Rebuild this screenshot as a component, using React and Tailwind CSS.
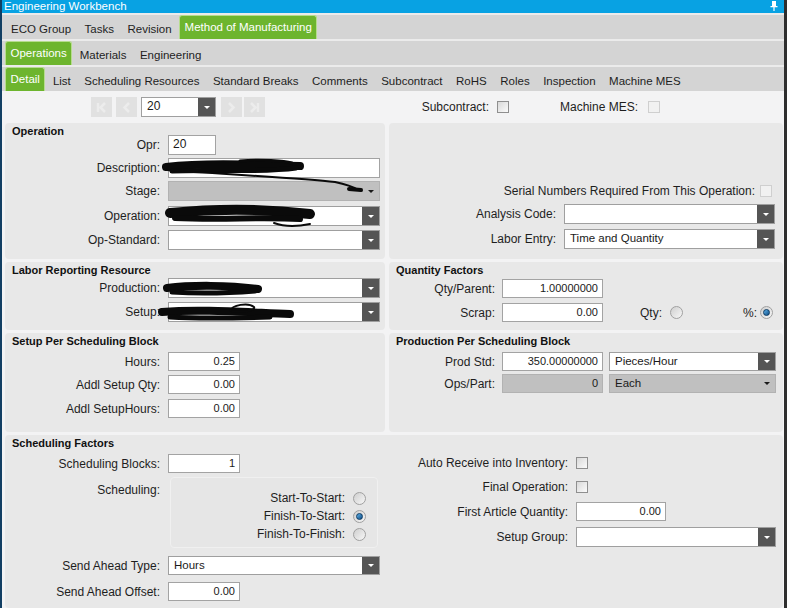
import React from 'react';

function Pin() {
  return (
    <svg width="8" height="10" viewBox="0 0 8 10" className="mt-[-2px]">
      <path d="M2 0h4v5h1.5v1.2h-7V5H2z" fill="#ffffff" />
      <path d="M4 6v4" stroke="#ffffff" strokeWidth="1.2" />
    </svg>
  );
}

function TabRow({ children }) {
  return (
    <div className="h-[26px] border-t-2 border-[#ebebeb] bg-[#d4d4d4] flex items-stretch px-[3px] gap-[1.5px]">
      {children}
    </div>
  );
}

function Tab({ label, active }) {
  if (active) {
    return (
      <div className="px-[4.5px] bg-[#6db52e] border border-b-0 border-[#b6dc8e] rounded-t-[3px] text-white text-[11.5px] leading-[22px] whitespace-nowrap">
        {label}
      </div>
    );
  }
  return <div className="px-[6px] text-[11.5px] leading-[28px] text-[#1e1e1e] whitespace-nowrap">{label}</div>;
}

function Arrow({ dark }) {
  if (dark) {
    return (
      <div className="w-[17px] bg-[#555555] flex items-center justify-center shrink-0">
        <div className="w-0 h-0 border-l-[3px] border-r-[3px] border-t-[3px] border-l-transparent border-r-transparent border-t-white" />
      </div>
    );
  }
  return (
    <div className="w-[17px] flex items-center justify-center shrink-0">
      <div className="w-0 h-0 border-l-[3px] border-r-[3px] border-t-[3px] border-l-transparent border-r-transparent border-t-[#1a1a1a]" />
    </div>
  );
}

function Combo({ className, value, disabled }) {
  return (
    <div
      className={`flex items-stretch border ${
        disabled ? 'bg-[#c0c0c0] border-[#b2b2b2]' : 'bg-white border-[#9f9f9f]'
      } ${className}`}
    >
      <div className="flex-1 pl-[5px] text-[11.5px] leading-[16px] text-[#1a1a1a] whitespace-nowrap overflow-hidden">
        {value}
      </div>
      <Arrow dark={!disabled} />
    </div>
  );
}

function Input({ className, value, disabled, left }) {
  return (
    <div
      className={`border ${disabled ? 'bg-[#c0c0c0] border-[#b2b2b2]' : 'bg-white border-[#a3a3a3]'} ${
        left ? 'text-left pl-[4px]' : 'text-right pr-[4px]'
      } text-[11px] leading-[17px] text-[#1a1a1a] ${className}`}
    >
      {value}
    </div>
  );
}

function Check({ disabled }) {
  return (
    <div
      className={`w-[12px] h-[12px] border shrink-0 ${
        disabled ? 'border-[#cfcfcf] bg-[#f1f1f1]' : 'border-[#8f8f8f] bg-gradient-to-br from-[#d9d9d9] to-[#fbfbfb]'
      }`}
    />
  );
}

function Radio({ checked }) {
  return (
    <div className="w-[13px] h-[13px] rounded-full border border-[#a0a0a0] bg-gradient-to-br from-[#cfcfcf] to-[#f7f7f7] flex items-center justify-center shrink-0">
      {checked ? (
        <div className="w-[7px] h-[7px] rounded-full bg-gradient-to-br from-[#5fb2ea] to-[#0d4f86] border border-[#0b3a63]" />
      ) : null}
    </div>
  );
}

function Panel({ className, children }) {
  return <div className={`bg-[#e8e8e8] rounded-[4px] ${className}`}>{children}</div>;
}

function Title({ children }) {
  return <div className="pl-[7px] pt-[2px] h-[14px] text-[11px] font-bold leading-[12px] text-[#111]">{children}</div>;
}

function Row({ label, lw, className, children }) {
  return (
    <div className={`flex items-center ${className || ''}`}>
      <div className={`${lw} text-right text-[12px] leading-[14px] text-[#1e1e1e] shrink-0 whitespace-nowrap`}>{label}</div>
      {children}
    </div>
  );
}

function NavBtn({ kind }) {
  let d = '';
  if (kind === 'first') d = 'M3 2v9 M10 2L5.5 6.5L10 11';
  if (kind === 'prev') d = 'M9 2L4.5 6.5L9 11';
  if (kind === 'next') d = 'M4 2L8.5 6.5L4 11';
  if (kind === 'last') d = 'M10 2v9 M3 2L7.5 6.5L3 11';
  return (
    <div className="w-[21px] h-[20px] bg-[#e1e1e1] flex items-center justify-center">
      <svg width="13" height="13" viewBox="0 0 13 13" fill="none">
        <path d={d} stroke="#ececec" strokeWidth="2.5" />
      </svg>
    </div>
  );
}

function Scribbles() {
  return (
    <svg
      className="absolute left-0 top-0 pointer-events-none"
      width="787"
      height="608"
      viewBox="0 0 787 608"
      fill="none"
      stroke="#0a0a0a"
      strokeLinecap="round"
      strokeLinejoin="round"
    >
      <path d="M166 167 C 200 163, 240 164, 300 166" strokeWidth="8" />
      <path d="M172 171 C 210 169, 260 173, 296 168" strokeWidth="5" />
      <path d="M240 161 C 260 159, 285 161, 292 163" strokeWidth="3" />
      <path d="M167 170 C 220 174, 300 178, 335 182 C 350 185, 355 188, 358 190" strokeWidth="2" />
      <path d="M349 189 L 361 190" strokeWidth="4" />
      <path d="M170 213 C 210 209, 260 208, 310 214" strokeWidth="10" />
      <path d="M175 218 C 220 220, 260 217, 300 219" strokeWidth="6" />
      <path d="M274 223 C 285 227, 300 226, 310 224" strokeWidth="2" />
      <path d="M167 288 C 190 285, 230 285, 258 289" strokeWidth="8" />
      <path d="M172 292 C 200 294, 230 293, 255 291" strokeWidth="5" />
      <path d="M162 312 C 200 309, 240 312, 290 314" strokeWidth="8" />
      <path d="M170 317 C 200 319, 240 318, 270 317" strokeWidth="5" />
      <path d="M230 311 C 232 305, 248 302, 254 307 C 256 311, 240 313, 232 311" strokeWidth="2" />
    </svg>
  );
}

export default function App() {
  const L = 'w-[163px] pr-[8px]';
  return (
    <div className="relative w-[787px] h-[608px] overflow-hidden flex font-['Liberation_Sans',Arial,sans-serif] text-[#1e1e1e] select-none">
      <div className="w-[2px] bg-[#123f63] shrink-0" />
      <div className="flex-1 flex flex-col min-w-0">
        <div className="h-[13px] bg-[#08a2e3] flex items-center justify-between pl-[2px] pr-[6px] shrink-0">
          <span className="text-white text-[11.5px] leading-[13px]">Engineering Workbench</span>
          <Pin />
        </div>
        <TabRow>
          <Tab label="ECO Group" />
          <Tab label="Tasks" />
          <Tab label="Revision" />
          <Tab label="Method of Manufacturing" active />
        </TabRow>
        <TabRow>
          <Tab label="Operations" active />
          <Tab label="Materials" />
          <Tab label="Engineering" />
        </TabRow>
        <TabRow>
          <Tab label="Detail" active />
          <Tab label="List" />
          <Tab label="Scheduling Resources" />
          <Tab label="Standard Breaks" />
          <Tab label="Comments" />
          <Tab label="Subcontract" />
          <Tab label="RoHS" />
          <Tab label="Roles" />
          <Tab label="Inspection" />
          <Tab label="Machine MES" />
        </TabRow>

        <div className="flex-1 bg-[#f3f3f4] pl-[3px] pr-[1px] flex flex-col min-h-0">
          <div className="h-[32px] flex items-center shrink-0">
            <div className="ml-[86px] flex items-center gap-[4px]">
              <NavBtn kind="first" />
              <NavBtn kind="prev" />
            </div>
            <Combo className="ml-[4px] w-[75px] h-[20px]" value={<span className="text-[12px]">20</span>} />
            <div className="ml-[5px] flex items-center gap-[2px]">
              <NavBtn kind="next" />
              <NavBtn kind="last" />
            </div>
            <div className="w-[224px] text-right text-[12px]">Subcontract:</div>
            <div className="ml-[8px]">
              <Check />
            </div>
            <div className="w-[129px] text-right text-[12px]">Machine MES:</div>
            <div className="ml-[10px]">
              <Check disabled />
            </div>
          </div>

          <div className="flex flex-col gap-[3px] flex-1 min-h-0">
            <div className="h-[136px] flex gap-[4px] shrink-0">
              <Panel className="w-[380px]">
                <Title>Operation</Title>
                <Row label="Opr:" lw={L} className="mt-[-2px]">
                  <Input className="w-[48px] h-[20px]" value={<span className="text-[12px]">20</span>} left />
                </Row>
                <Row label="Description:" lw={L} className="mt-[3px]">
                  <Input className="w-[212px] h-[20px]" value="" left />
                </Row>
                <Row label="Stage:" lw={L} className="mt-[3px]">
                  <Combo className="w-[212px] h-[20px]" value="" disabled />
                </Row>
                <Row label="Operation:" lw={L} className="mt-[5px]">
                  <Combo className="w-[212px] h-[20px]" value="" />
                </Row>
                <Row label="Op-Standard:" lw={L} className="mt-[4px]">
                  <Combo className="w-[212px] h-[20px]" value="" />
                </Row>
              </Panel>
              <Panel className="flex-1 flex flex-col justify-end pb-[10px]">
                <div className="flex items-center justify-end pr-[11px] h-[14px]">
                  <span className="text-[12px]">Serial Numbers Required From This Operation:</span>
                  <div className="ml-[5px]">
                    <Check disabled />
                  </div>
                </div>
                <Row label="Analysis Code:" lw="w-[175px] pr-[8px]" className="mt-[6px]">
                  <Combo className="w-[211px] h-[20px]" value="" />
                </Row>
                <Row label="Labor Entry:" lw="w-[175px] pr-[8px]" className="mt-[5px]">
                  <Combo className="w-[211px] h-[20px]" value="Time and Quantity" />
                </Row>
              </Panel>
            </div>

            <div className="h-[68px] flex gap-[4px] shrink-0">
              <Panel className="w-[380px]">
                <Title>Labor Reporting Resource</Title>
                <Row label="Production:" lw={L} className="mt-[2px]">
                  <Combo className="w-[212px] h-[20px]" value="" />
                </Row>
                <Row label="Setup:" lw={L} className="mt-[4px]">
                  <Combo className="w-[212px] h-[20px]" value="" />
                </Row>
              </Panel>
              <Panel className="flex-1">
                <Title>Quantity Factors</Title>
                <Row label="Qty/Parent:" lw="w-[113px] pr-[7px]" className="mt-[3px]">
                  <Input className="w-[101px] h-[19px]" value="1.00000000" />
                </Row>
                <Row label="Scrap:" lw="w-[113px] pr-[7px]" className="mt-[5px]">
                  <Input className="w-[101px] h-[19px]" value="0.00" />
                  <span className="ml-[37px] text-[12px]">Qty:</span>
                  <div className="ml-[8px]">
                    <Radio />
                  </div>
                  <span className="ml-[60px] text-[12px]">%:</span>
                  <div className="ml-[3px]">
                    <Radio checked />
                  </div>
                </Row>
              </Panel>
            </div>

            <div className="h-[99px] flex gap-[4px] shrink-0">
              <Panel className="w-[380px]">
                <Title>Setup Per Scheduling Block</Title>
                <Row label="Hours:" lw={L} className="mt-[5px]">
                  <Input className="w-[72px] h-[19px]" value="0.25" />
                </Row>
                <Row label="Addl Setup Qty:" lw={L} className="mt-[4px]">
                  <Input className="w-[72px] h-[19px]" value="0.00" />
                </Row>
                <Row label="Addl SetupHours:" lw={L} className="mt-[5px]">
                  <Input className="w-[72px] h-[19px]" value="0.00" />
                </Row>
              </Panel>
              <Panel className="flex-1">
                <Title>Production Per Scheduling Block</Title>
                <Row label="Prod Std:" lw="w-[113px] pr-[7px]" className="mt-[5px]">
                  <Input className="w-[101px] h-[19px]" value="350.00000000" />
                  <Combo className="ml-[6px] w-[167px] h-[19px]" value="Pieces/Hour" />
                </Row>
                <Row label="Ops/Part:" lw="w-[113px] pr-[7px]" className="mt-[3px]">
                  <Input className="w-[101px] h-[19px]" value="0" disabled />
                  <Combo className="ml-[6px] w-[167px] h-[19px]" value="Each" disabled />
                </Row>
              </Panel>
            </div>

            <Panel className="flex-1 min-h-0">
              <Title>Scheduling Factors</Title>
              <div className="flex gap-[4px]">
                <div className="w-[380px] shrink-0">
                  <Row label="Scheduling Blocks:" lw={L} className="mt-[5px]">
                    <Input className="w-[72px] h-[19px]" value="1" />
                  </Row>
                  <div className="flex items-start mt-[4px]">
                    <div className="w-[165px] pr-[10px] pt-[6px] text-right text-[12px] leading-[14px] shrink-0">Scheduling:</div>
                    <div className="w-[208px] h-[71px] rounded-[4px] border border-[#f0f0f0] bg-[#e6e6e6] flex flex-col items-end pr-[11px] pt-[11px]">
                      {[
                        ['Start-To-Start:', false],
                        ['Finish-To-Start:', true],
                        ['Finish-To-Finish:', false],
                      ].map(([t, c]) => (
                        <div key={t} className="h-[18px] flex items-center">
                          <span className="text-[12px]">{t}</span>
                          <div className="ml-[8px]">
                            <Radio checked={c} />
                          </div>
                        </div>
                      ))}
                    </div>
                  </div>
                  <Row label="Send Ahead Type:" lw={L} className="mt-[8px]">
                    <Combo className="w-[212px] h-[19px]" value="Hours" />
                  </Row>
                  <Row label="Send Ahead Offset:" lw={L} className="mt-[7px]">
                    <Input className="w-[72px] h-[19px]" value="0.00" />
                  </Row>
                </div>
                <div className="flex-1">
                  <Row label="Auto Receive into Inventory:" lw="w-[187px] pr-[8px]" className="mt-[4px] h-[19px]">
                    <Check />
                  </Row>
                  <Row label="Final Operation:" lw="w-[187px] pr-[8px]" className="mt-[5px] h-[19px]">
                    <Check />
                  </Row>
                  <Row label="First Article Quantity:" lw="w-[187px] pr-[8px]" className="mt-[6px]">
                    <Input className="w-[90px] h-[19px]" value="0.00" />
                  </Row>
                  <Row label="Setup Group:" lw="w-[187px] pr-[8px]" className="mt-[6px]">
                    <Combo className="w-[200px] h-[20px]" value="" />
                  </Row>
                </div>
              </div>
            </Panel>
          </div>
        </div>
      </div>
      <div className="w-[3px] bg-[#2e2e2e] shrink-0" />
      <Scribbles />
    </div>
  );
}
